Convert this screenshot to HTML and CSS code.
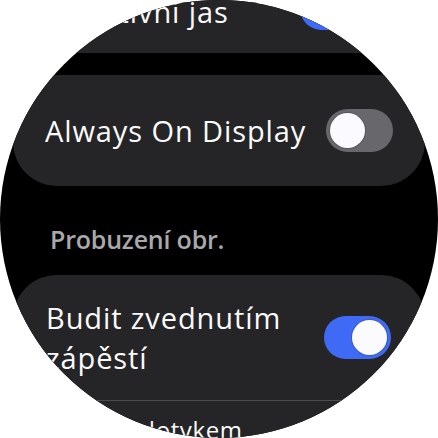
FILE: index.html
```html
<!DOCTYPE html>
<html lang="cs">
<head>
<meta charset="utf-8">
<title>Displej</title>
<link rel="stylesheet" href="styles.css">
</head>
<body>
<div class="screen">
  <div class="list">
    <div class="card card-top">
      <span class="label">Adaptivní jas</span>
      <span class="toggle on"><span class="knob"></span></span>
    </div>
    <div class="card card-single">
      <span class="label">Always On Display</span>
      <span class="toggle"><span class="knob"></span></span>
    </div>
    <div class="section">Probuzení obr.</div>
    <div class="card card-group">
      <div class="row row-main">
        <span class="label label-wrap">Budit zvednutím zápěstí</span>
        <span class="toggle on"><span class="knob"></span></span>
      </div>
      <div class="divider"></div>
      <div class="row row-small">
        <span class="label label-small">Budit dotykem</span>
      </div>
    </div>
  </div>
</div>
</body>
</html>
```

FILE: styles.css
```css
html, body {
  margin: 0;
  padding: 0;
  background: #ffffff;
}

.screen {
  width: 438px;
  height: 438px;
  border-radius: 50%;
  overflow: hidden;
  background: #000000;
  font-family: "Open Sans", Roboto, sans-serif;
  color: #fafafa;
}

.list {
  display: flex;
  flex-direction: column;
  padding: 0 13px;
  margin-top: -50px;
}

.card {
  background: #252527;
  border-radius: 44px;
  box-sizing: border-box;
}

.label {
  font-size: 29px;
  line-height: 34px;
  font-weight: 400;
  letter-spacing: 0.9px;
}

.card-top {
  height: 103px;
  display: flex;
  align-items: flex-start;
  padding: 37px 58px 0 32px;
}

.card-top .label {
  margin-top: 8px;
}

.card-top .toggle {
  margin-left: auto;
}

.card-single {
  margin-top: 22px;
  height: 111px;
  display: flex;
  align-items: center;
  justify-content: space-between;
  padding: 0 32px 0 32px;
}

.section {
  padding: 38px 0 21px 37px;
  font-size: 25px;
  line-height: 30px;
  font-weight: 600;
  letter-spacing: -0.2px;
  color: #a9a9ac;
}

.card-group {
  display: flex;
  flex-direction: column;
}

.row {
  display: flex;
  align-items: center;
  justify-content: space-between;
}

.row-main {
  height: 125px;
  padding: 0 34px 0 33px;
}

.label-wrap {
  line-height: 40px;
  max-width: 250px;
}

.divider {
  height: 1px;
  background: #4b4b4e;
  margin: 0 30px;
}

.row-small {
  padding: 15px 34px 0 58px;
}

.label-small {
  font-size: 24px;
  line-height: 28px;
  letter-spacing: 0.6px;
}

.toggle {
  flex: none;
  width: 67px;
  height: 43px;
  border-radius: 22px;
  background: #68676c;
  box-sizing: border-box;
  padding: 4px;
  display: flex;
  align-items: center;
}

.toggle.on {
  background: #3f6af5;
  justify-content: flex-end;
}

.knob {
  width: 35px;
  height: 35px;
  border-radius: 50%;
  background: #fbfbff;
  box-shadow: 0 0 0 1px rgba(60, 60, 70, 0.35);
}
```
